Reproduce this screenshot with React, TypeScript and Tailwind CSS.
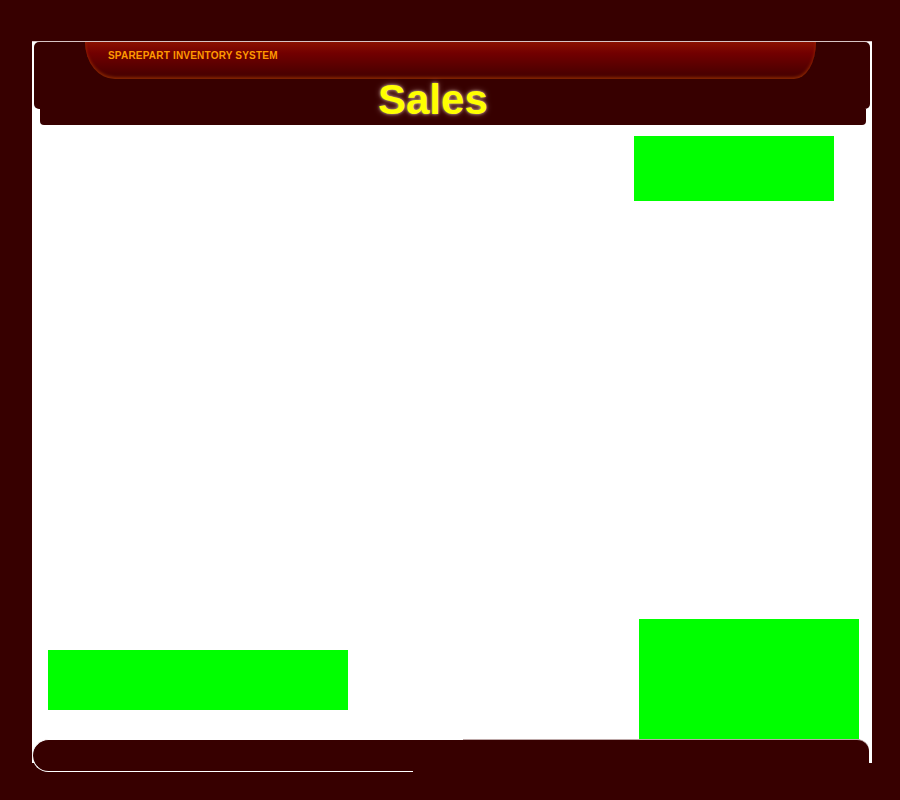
export default function App() {
    return (
        <div className="h-[800px] w-full bg-[#370000] pt-[41px] pl-[32px]">
            <div className="w-[840px] bg-white border-t border-[#d8c4c4]">
                {/* header */}
                <div className="mx-[2px] h-[67px] bg-[#370000] rounded-t-[5px] rounded-b-[5px]">
                    <div className="ml-[51px] w-[731px] h-[37px] rounded-bl-[30px_37px] rounded-br-[22px_37px] bg-[linear-gradient(to_bottom,#8a1000,#720000_30%,#560000_70%,#420000)] shadow-[inset_0_-2px_3px_rgba(190,70,0,0.55)] pt-[9px] pl-[23px]">
                        <div className="font-['Liberation_Sans',Arial,sans-serif] font-bold text-[10px] leading-[10px] tracking-[0.2px] text-[#ff9900]">
                            SPAREPART INVENTORY SYSTEM
                        </div>
                    </div>
                    <div className="pl-[344px] h-[30px] pt-[2px] font-['Liberation_Sans',Arial,sans-serif] font-bold text-[42px] leading-[38px] text-[#ffff00] [text-shadow:0_0_3px_rgba(255,240,220,0.7),0_0_6px_rgba(255,220,200,0.4)]">
                        Sales
                    </div>
                </div>
                <div className="ml-[8px] mr-[6px] h-[16px] bg-[#370000] rounded-b-[4px]" />

                {/* body */}
                <div className="h-[464px] pt-[11px] pl-[602px]">
                    <div className="w-[200px] h-[65px] bg-[#00ff00]" />
                </div>
                <div className="h-[150px] flex items-start">
                    <div className="ml-[16px] mt-[61px] w-[300px] h-[60px] bg-[#00ff00]" />
                    <div className="ml-[291px] mt-[30px] w-[220px] h-[120px] bg-[#00ff00]" />
                </div>

                {/* footer */}
                <div className="h-[33px] flex bg-[linear-gradient(to_bottom,#ffffff_0,#ffffff_24px,#370000_24px)]">
                    <div className="w-[381px] h-[33px] bg-[#370000] border-l border-y border-white rounded-l-[17px]" />
                    <div className="w-[50px] h-[33px] bg-[#370000] border-t border-white" />
                    <div className="w-[406px] h-[33px] bg-[#370000] border-t border-[#bda8a8] rounded-tr-[12px]" />
                </div>
            </div>
        </div>
    );
}
